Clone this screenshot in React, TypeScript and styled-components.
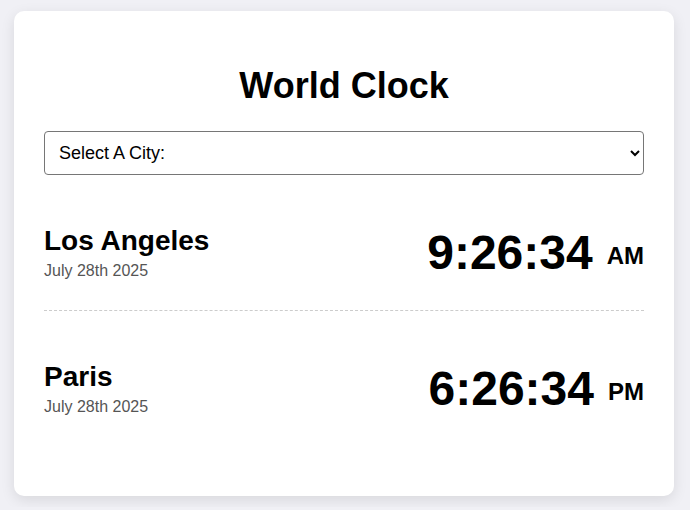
import React from 'react';
import styled, { createGlobalStyle } from 'styled-components';

const GlobalStyle = createGlobalStyle`
  body {
    margin: 0;
    background-color: #f0f0f5;
    font-family: 'Liberation Sans', Arial, sans-serif;
  }
`;

const Card = styled.div`
  width: 660px;
  margin: 11px 0 11px 14px;
  box-sizing: border-box;
  padding: 30px;
  background-color: #ffffff;
  border-radius: 10px;
  box-shadow: 0 4px 14px rgba(0, 0, 0, 0.1);
`;

const Title = styled.h1`
  margin: 24px 0;
  text-align: center;
  font-size: 36px;
  font-weight: bold;
  color: #000;
`;

const CitySelect = styled.select`
  display: block;
  width: 100%;
  height: 44px;
  margin-bottom: 20px;
  padding: 0 10px;
  font-family: 'Liberation Sans', Arial, sans-serif;
  font-size: 18px;
  color: #000;
  background-color: #fff;
  border: 1px solid #767676;
  border-radius: 4px;
`;

const ClockRow = styled.div<{ $last?: boolean }>`
  display: flex;
  justify-content: space-between;
  align-items: center;
  padding: 30px 0;
  margin-bottom: 20px;
  border-bottom: ${(p) => (p.$last ? 'none' : '1px dashed #ccc')};
`;

const CityInfo = styled.div`
  display: flex;
  flex-direction: column;
`;

const CityName = styled.div`
  font-size: 28px;
  font-weight: bold;
  color: #000;
  margin-bottom: 5px;
`;

const CityDate = styled.div`
  font-size: 16px;
  color: #555;
`;

const Time = styled.div`
  font-size: 48px;
  font-weight: bold;
  color: #000;
`;

const Meridiem = styled.span`
  margin-left: 14px;
  font-size: 24px;
  vertical-align: middle;
`;

const CLOCKS = [
  { city: 'Los Angeles', date: 'July 28th 2025', time: '9:26:34', meridiem: 'AM' },
  { city: 'Paris', date: 'July 28th 2025', time: '6:26:34', meridiem: 'PM' },
];

function App() {
  return (
    <>
      <GlobalStyle />
      <Card>
        <Title>World Clock</Title>
        <CitySelect defaultValue="">
          <option value="">Select A City:</option>
          <option value="tokyo">Tokyo</option>
          <option value="london">London</option>
        </CitySelect>
        {CLOCKS.map((c, i) => (
          <ClockRow key={c.city} $last={i === CLOCKS.length - 1}>
            <CityInfo>
              <CityName>{c.city}</CityName>
              <CityDate>{c.date}</CityDate>
            </CityInfo>
            <Time>
              {c.time}
              <Meridiem>{c.meridiem}</Meridiem>
            </Time>
          </ClockRow>
        ))}
      </Card>
    </>
  );
}

export default App;
